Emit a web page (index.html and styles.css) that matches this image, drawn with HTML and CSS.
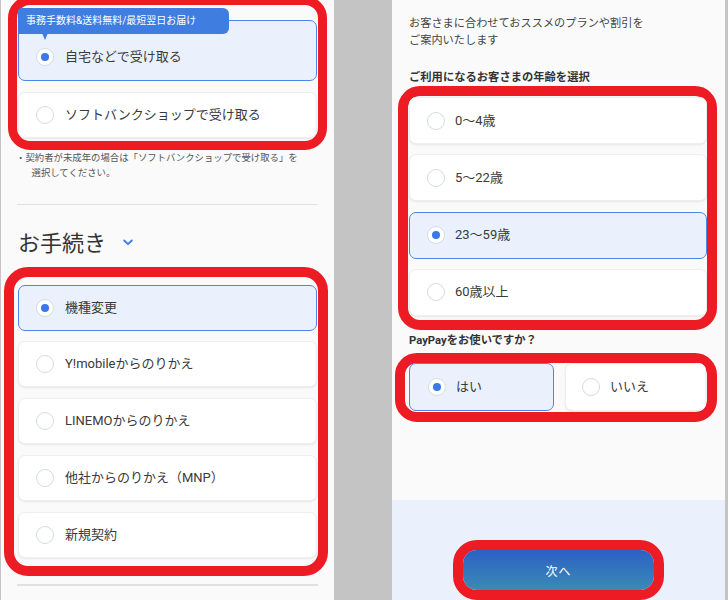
FILE: index.html
```html
<!DOCTYPE html>
<html lang="ja">
<head>
<meta charset="utf-8">
<title>お手続き選択</title>
<link rel="stylesheet" href="styles.css">
</head>
<body>
<div class="screen">
  <section class="panel panel-left">
    <div class="mark mark-delivery">
      <div class="card card-on card-tall">
        <span class="badge">事務手数料&amp;送料無料/最短翌日お届け</span>
        <span class="radio radio-on"></span>
        <span class="label">自宅などで受け取る</span>
      </div>
      <div class="card">
        <span class="radio"></span>
        <span class="label">ソフトバンクショップで受け取る</span>
      </div>
    </div>
    <p class="note"><span class="line">・契約者が未成年の場合は「ソフトバンクショップで受け取る」を</span><br><span class="line">選択してください。</span></p>
    <hr class="rule">
    <h2 class="heading">お手続き
      <svg class="chev" width="10" height="7" viewBox="0 0 10 7"><path d="M1.2 1.5 L5 5.2 L8.8 1.5" fill="none" stroke="#3b78e7" stroke-width="1.8" stroke-linecap="round" stroke-linejoin="round"/></svg>
    </h2>
    <div class="mark mark-proc">
      <div class="card card-on"><span class="radio radio-on"></span><span class="label">機種変更</span></div>
      <div class="card"><span class="radio"></span><span class="label">Y!mobileからのりかえ</span></div>
      <div class="card"><span class="radio"></span><span class="label">LINEMOからのりかえ</span></div>
      <div class="card"><span class="radio"></span><span class="label">他社からのりかえ（MNP）</span></div>
      <div class="card"><span class="radio"></span><span class="label">新規契約</span></div>
    </div>
    <hr class="rule rule-bottom">
  </section>

  <section class="panel panel-right">
    <div class="right-body">
      <p class="intro">お客さまに合わせておススメのプランや割引を<br>ご案内いたします</p>
      <p class="question">ご利用になるお客さまの年齢を選択</p>
      <div class="mark mark-age">
        <div class="card card-r"><span class="radio"></span><span class="label">0〜4歳</span></div>
        <div class="card card-r"><span class="radio"></span><span class="label">5〜22歳</span></div>
        <div class="card card-r card-on"><span class="radio radio-on"></span><span class="label">23〜59歳</span></div>
        <div class="card card-r"><span class="radio"></span><span class="label">60歳以上</span></div>
      </div>
      <p class="question question-pay">PayPayをお使いですか？</p>
      <div class="mark mark-pay">
        <div class="card card-pay card-on"><span class="radio radio-on"></span><span class="label">はい</span></div>
        <div class="card card-pay card-pay2"><span class="radio"></span><span class="label">いいえ</span></div>
      </div>
    </div>
    <div class="footer">
      <div class="mark mark-btn">
        <button class="next" type="button">次へ</button>
      </div>
    </div>
  </section>
</div>
</body>
</html>
```

FILE: styles.css
```css
* {
  box-sizing: border-box;
}

html, body {
  margin: 0;
  padding: 0;
}

body {
  background: #c4c4c4;
  font-family: Roboto, "Noto Sans CJK JP", sans-serif;
  color: #333;
  width: 728px;
  height: 600px;
  overflow: hidden;
}

.screen {
  display: flex;
  gap: 58px;
  height: 600px;
}

.panel {
  background: #fafafa;
  height: 600px;
  overflow: hidden;
}

.panel-left {
  width: 333px;
  margin-left: 1px;
}

.panel-right {
  width: 333px;
  display: flex;
  flex-direction: column;
}

/* red annotation outlines */
.mark {
  border-style: solid;
  border-color: #ed1c24;
  border-radius: 22px;
}

.mark-delivery {
  margin: -4px 7px 0 7px;
  border-width: 9px;
  padding: 15px 1px 3px 1px;
  display: flex;
  flex-direction: column;
  gap: 11px;
}

.mark-proc {
  margin: 8px 6px 0 3px;
  border-width: 10px;
  border-radius: 24px;
  padding: 8px 1px 8px 4px;
  display: flex;
  flex-direction: column;
  gap: 10.8px;
}

.mark-age {
  margin: 0.5px 8px 0 6px;
  border-width: 10px;
  padding: 1px 0 4px 1px;
  display: flex;
  flex-direction: column;
  gap: 10.3px;
}

.mark-pay {
  margin: 3.5px 8px 0 3px;
  border-width: 10px;
  border-radius: 22px;
  padding: 0 1px 1px 4px;
  display: grid;
  grid-template-columns: 145px 1fr;
  gap: 11px;
}

.mark-btn {
  border-width: 10px;
  border-radius: 24px;
  width: 211px;
  margin: 0 auto;
}

/* option cards */
.card {
  position: relative;
  display: flex;
  align-items: center;
  height: 46px;
  padding: 0 17px;
  background: #fff;
  border: 1px solid #eeeeee;
  border-radius: 7px;
  box-shadow: 0 1px 2px rgba(0, 0, 0, 0.08);
}

.card-on {
  background: #eaf1fd;
  border-color: #4d86ea;
  box-shadow: none;
}

.card-tall {
  height: 61px;
  padding-top: 13px;
}

.card-r {
  height: 47px;
  padding-left: 17px;
}

.card-pay {
  height: 48px;
  padding-left: 18px;
}

.card-pay2 {
  padding-left: 16px;
}

.radio {
  position: relative;
  flex: none;
  width: 18px;
  height: 18px;
  border-radius: 50%;
  background: #fff;
  border: 1.5px solid #d5dbe4;
}

.radio-on::after {
  content: "";
  position: absolute;
  left: 50%;
  top: 50%;
  width: 8px;
  height: 8px;
  margin: -4px 0 0 -4px;
  border-radius: 50%;
  background: #3b78e7;
}

.label {
  margin-left: 11px;
  font-size: 13px;
  line-height: 18px;
  color: #3a3a3a;
  white-space: nowrap;
}

.card-r .label,
.card-pay .label {
  margin-left: 10px;
}

.badge {
  position: absolute;
  top: -13px;
  left: -1px;
  width: 211px;
  height: 26px;
  padding: 0 8px;
  background: #3f7de1;
  color: #fff;
  font-size: 10px;
  line-height: 26px;
  border-radius: 4px 6px 6px 0;
  white-space: nowrap;
}

.badge::after {
  content: "";
  position: absolute;
  left: 24px;
  top: 25px;
  border-left: 3.5px solid transparent;
  border-right: 3.5px solid transparent;
  border-top: 7px solid #3f7de1;
}

.note {
  margin: 0;
  padding-left: 30.5px;
  text-indent: -15.5px;
  font-size: 9.4px;
  line-height: 15px;
  color: #555;
}

.note .line {
  white-space: nowrap;
}

.rule {
  margin: 23.5px 16px 0 16px;
  height: 1.5px;
  border: none;
  background: #e1e1e1;
}

.rule-bottom {
  margin-top: 8.5px;
}

.heading {
  margin: 23.5px 0 0 0;
  padding-left: 17px;
  font-size: 22px;
  font-weight: 400;
  line-height: 30px;
  color: #333;
  display: flex;
  align-items: center;
}

.chev {
  margin-left: 17px;
  margin-top: -3px;
}

/* right side */
.right-body {
  height: 500px;
  flex: none;
}

.intro {
  margin: 14.5px 0 0 17px;
  font-size: 11.2px;
  line-height: 17px;
  color: #444;
}

.question {
  margin: 20px 0 0 17px;
  font-size: 11.3px;
  line-height: 17px;
  font-weight: 700;
  color: #333;
}

.question-pay {
  margin-top: 2.5px;
}

.footer {
  flex: 1;
  background: #ebf1fc;
  padding-top: 40px;
}

.next {
  display: block;
  width: 191px;
  height: 40px;
  border: none;
  border-radius: 14px;
  background: linear-gradient(to bottom, #2c60c5, #3a8bb4);
  color: #fff;
  font-family: Roboto, "Noto Sans CJK JP", sans-serif;
  font-size: 12px;
  letter-spacing: 1px;
}
```
